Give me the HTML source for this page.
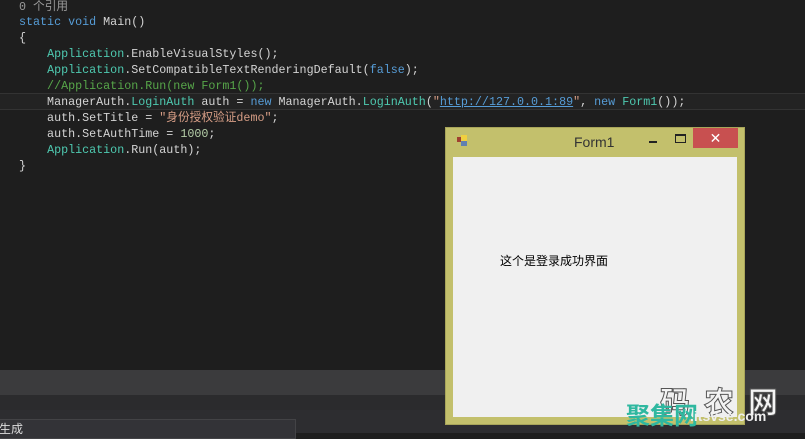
<!DOCTYPE html>
<html><head><meta charset="utf-8"><style>
body{margin:0;width:805px;height:433px;background:#1e1e1e;overflow:hidden;position:relative;font-family:"Liberation Mono","Noto Sans CJK SC",monospace;}
.l{position:absolute;left:19px;font-size:11.7px;color:#d4d4d4;white-space:pre;line-height:16px;}
.t{color:#4ec9b0}.k{color:#569cd6}.c{color:#57a64a}.s{color:#d69d85}.g{color:#9a9a9a}.n{color:#b5cea8}
.u{color:#569cd6;text-decoration:underline}
</style></head><body>
<div style="position:absolute;left:0;top:93px;width:805px;height:17px;border-top:1px solid #333;border-bottom:1px solid #333;box-sizing:border-box;background:#232323"></div>
<div class="l g" style="top:-1px">0 个引用</div>
<div class="l" style="top:14px"><span class="k">static void</span> Main()</div>
<div class="l" style="top:30px">{</div>
<div class="l" style="top:46px">    <span class="t">Application</span>.EnableVisualStyles();</div>
<div class="l" style="top:62px">    <span class="t">Application</span>.SetCompatibleTextRenderingDefault(<span class="k">false</span>);</div>
<div class="l c" style="top:78px">    //Application.Run(new Form1());</div>
<div class="l" style="top:94px">    ManagerAuth.<span class="t">LoginAuth</span> auth = <span class="k">new</span> ManagerAuth.<span class="t">LoginAuth</span>(<span class="s">"</span><span class="u">http://127.0.0.1:89</span><span class="s">"</span>, <span class="k">new</span> <span class="t">Form1</span>());</div>
<div class="l" style="top:110px">    auth.SetTitle = <span class="s">"身份授权验证demo"</span>;</div>
<div class="l" style="top:126px">    auth.SetAuthTime = <span class="n">1000</span>;</div>
<div class="l" style="top:142px">    <span class="t">Application</span>.Run(auth);</div>
<div class="l" style="top:158px">}</div>

<div style="position:absolute;left:0;top:370px;width:805px;height:25px;background:#3b3b3d"></div>
<div style="position:absolute;left:0;top:395px;width:805px;height:15px;background:#2b2b2d"></div>
<div style="position:absolute;left:0;top:410px;width:805px;height:23px;background:#2d2d30"></div>
<div style="position:absolute;left:-2px;top:419px;width:296px;height:18px;background:#333337;border:1px solid #434346;color:#ddd;font-size:12px;font-family:'Noto Sans CJK SC',sans-serif;line-height:18px">生成</div>

<div style="position:absolute;left:445px;top:127px;width:300px;height:298px;background:#c3c06c;border:1px solid #a8a55a;box-sizing:border-box"></div>
<div style="position:absolute;left:453px;top:157px;width:284px;height:260px;background:#f0f0f0"></div>
<div style="position:absolute;left:457px;top:137px;width:5px;height:5px;background:#a04030"></div>
<div style="position:absolute;left:461px;top:135px;width:6px;height:6px;background:#f0d040"></div>
<div style="position:absolute;left:461px;top:141px;width:6px;height:5px;background:#6080b0"></div>
<div style="position:absolute;left:574px;top:134px;font:14px 'Liberation Sans',sans-serif;color:#333">Form1</div>
<div style="position:absolute;left:649px;top:141px;width:8px;height:2px;background:#222"></div>
<div style="position:absolute;left:675px;top:134px;width:9px;height:6px;border:1px solid #222;border-top-width:2px"></div>
<div style="position:absolute;left:693px;top:128px;width:45px;height:20px;background:#c85050;color:#fff;text-align:center;font:14px 'Liberation Sans',sans-serif;line-height:20px">✕</div>
<div style="position:absolute;left:500px;top:252px;font:12px 'Noto Sans CJK SC',sans-serif;color:#000">这个是登录成功界面</div>

<div style="position:absolute;left:660px;top:378px;font:bold 30px 'Noto Sans CJK SC',sans-serif;color:#f4f4f4;letter-spacing:14px;-webkit-text-stroke:1px #555;white-space:nowrap">码农网</div>
<div style="position:absolute;left:626px;top:396px;font:bold 24px 'Noto Sans CJK SC',sans-serif;color:#2fb8a0">聚集网</div>
<div style="position:absolute;left:690px;top:408px;font:bold 14px 'Liberation Sans',sans-serif;color:#eee">.itsvse.com</div>
</body></html>
